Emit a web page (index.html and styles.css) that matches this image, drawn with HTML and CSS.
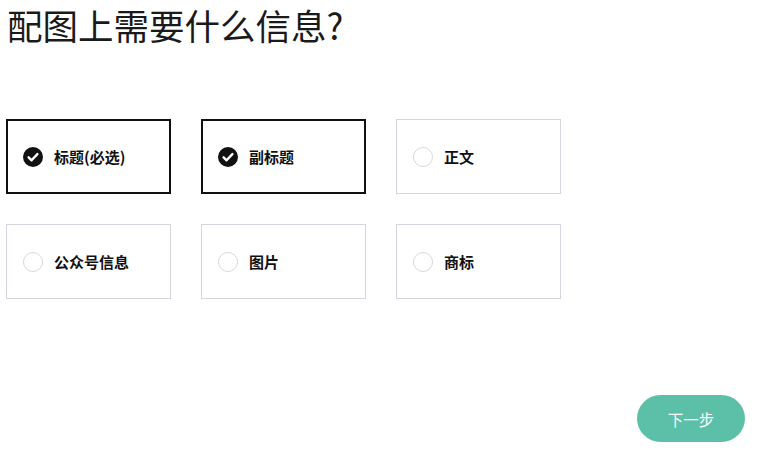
FILE: index.html
```html
<!DOCTYPE html>
<html lang="zh-CN">
<head>
  <meta charset="UTF-8" />
  <title>配图上需要什么信息？</title>
  <link rel="stylesheet" href="styles.css">
</head>
<body>
  <main class="page">
    <h1 class="page-title">配图上需要什么信息?</h1>

    <!-- 选项 -->
    <section class="option-grid">
      <div class="option is-checked">
        <span class="option-mark">
          <svg viewBox="0 0 20 20" width="20" height="20"><circle cx="10" cy="10" r="10" fill="#111"/><path d="M5.6 10.3l3 3 5.8-6.2" fill="none" stroke="#fff" stroke-width="2.4" stroke-linecap="round" stroke-linejoin="round"/></svg>
        </span>
        <span class="option-label">标题(必选)</span>
      </div>
      <div class="option is-checked">
        <span class="option-mark">
          <svg viewBox="0 0 20 20" width="20" height="20"><circle cx="10" cy="10" r="10" fill="#111"/><path d="M5.6 10.3l3 3 5.8-6.2" fill="none" stroke="#fff" stroke-width="2.4" stroke-linecap="round" stroke-linejoin="round"/></svg>
        </span>
        <span class="option-label">副标题</span>
      </div>
      <div class="option">
        <span class="option-mark option-mark--empty"></span>
        <span class="option-label">正文</span>
      </div>
      <div class="option">
        <span class="option-mark option-mark--empty"></span>
        <span class="option-label">公众号信息</span>
      </div>
      <div class="option">
        <span class="option-mark option-mark--empty"></span>
        <span class="option-label">图片</span>
      </div>
      <div class="option">
        <span class="option-mark option-mark--empty"></span>
        <span class="option-label">商标</span>
      </div>
    </section>

    <footer class="page-actions">
      <button class="next-button">下一步</button>
    </footer>
  </main>
</body>
</html>
```

FILE: styles.css
```css
* { box-sizing: border-box; margin: 0; padding: 0; }

html, body {
  background-color: #fff;
  color: #111;
  font-family: "Noto Sans CJK SC", "Noto Sans", sans-serif;
}

.page {
  min-height: 100vh;
  display: flex;
  flex-direction: column;
  padding: 0 14px 25px 6px;
}

.page-title {
  font-size: 35.5px;
  font-weight: 400;
  line-height: 42px;
  color: #1a1a1a;
  margin-top: 4px;
  padding-left: 1px;
}

.option-grid {
  margin-top: 73px;
  display: grid;
  grid-template-columns: repeat(3, 165px);
  grid-auto-rows: 75px;
  gap: 30px 30px;
}

.option {
  display: flex;
  align-items: center;
  gap: 11px;
  padding-left: 16px;
  border: 1px solid #d9d3de;
  background-color: #fff;
}

.option.is-checked {
  border: 2px solid #111;
  padding-left: 15px;
}

.option-mark {
  width: 20px;
  height: 20px;
  flex-shrink: 0;
  display: block;
}

.option-mark svg {
  display: block;
}

.option-mark--empty {
  border: 1px solid #d8d8dc;
  border-radius: 50%;
}

.option-label {
  font-size: 15px;
  font-weight: 700;
  color: #111;
}

.page-actions {
  margin-top: auto;
  display: flex;
  justify-content: flex-end;
}

.next-button {
  width: 108px;
  height: 47px;
  border: none;
  border-radius: 24px;
  background-color: #5cbfa8;
  color: #fff;
  font-family: inherit;
  font-size: 15.5px;
  cursor: pointer;
}
```
